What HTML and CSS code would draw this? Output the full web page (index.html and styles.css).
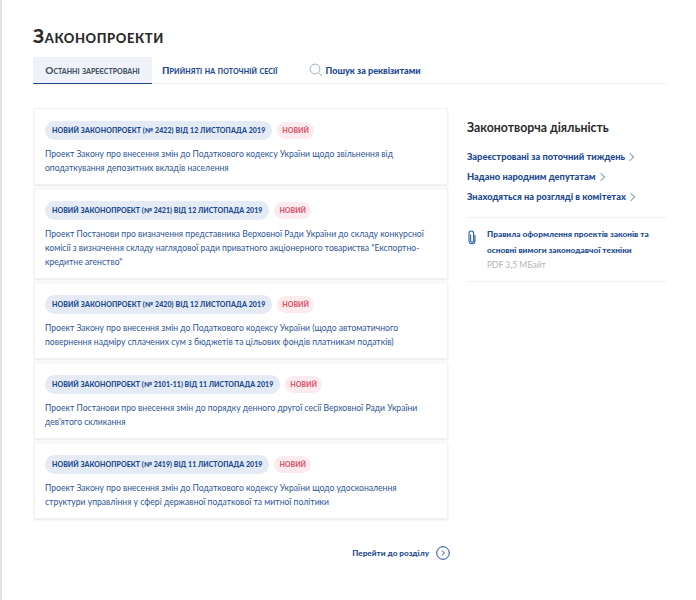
FILE: index.html
```html
<!DOCTYPE html>
<html lang="uk">
<head>
    <meta charset="UTF-8">
    <title>Законопроекти</title>
    <link rel="stylesheet" href="styles.css">
</head>
<body>

<div class="page">
    <h1 class="title">Законопроекти</h1>

    <div class="tabs">
        <a class="tab tab-active">Останні зареєстровані</a>
        <a class="tab tab-link">Прийняті на поточній сесії</a>
        <a class="tab tab-search">
            <svg class="search-icon" viewBox="0 0 14 14" width="14" height="14">
                <circle cx="6" cy="6" r="4.9" fill="none" stroke="#9fb0c4" stroke-width="1"/>
                <path d="M9.6 9.6L13 13" fill="none" stroke="#9fb0c4" stroke-width="1"/>
            </svg>
            Пошук за реквізитами
        </a>
    </div>

    <div class="columns">
        <div class="main">
            <div class="card">
                <div class="card-tags">
                    <span class="pill">Новий законопроект (№ 2422) від 12 листопада 2019</span>
                    <span class="badge">Новий</span>
                </div>
                <p class="card-text">Проект Закону про внесення змін до Податкового кодексу України щодо звільнення від<br>оподаткування депозитних вкладів населення</p>
            </div>
            <div class="card">
                <div class="card-tags">
                    <span class="pill pill-tight">Новий законопроект (№ 2421) від 12 листопада 2019</span>
                    <span class="badge">Новий</span>
                </div>
                <p class="card-text">Проект Постанови про визначення представника Верховної Ради України до складу конкурсної<br>комісії з визначення складу наглядової ради приватного акціонерного товариства "Експортно-<br>кредитне агенство"</p>
            </div>
            <div class="card">
                <div class="card-tags">
                    <span class="pill">Новий законопроект (№ 2420) від 12 листопада 2019</span>
                    <span class="badge">Новий</span>
                </div>
                <p class="card-text">Проект Закону про внесення змін до Податкового кодексу України (щодо автоматичного<br>повернення надміру сплачених сум з бюджетів та цільових фондів платникам податків)</p>
            </div>
            <div class="card">
                <div class="card-tags">
                    <span class="pill pill-tight">Новий законопроект (№ 2101-11) від 11 листопада 2019</span>
                    <span class="badge">Новий</span>
                </div>
                <p class="card-text">Проект Постанови про внесення змін до порядку денного другої сесії Верховної Ради України<br>дев'ятого скликання</p>
            </div>
            <div class="card">
                <div class="card-tags">
                    <span class="pill pill-tight">Новий законопроект (№ 2419) від 11 листопада 2019</span>
                    <span class="badge">Новий</span>
                </div>
                <p class="card-text">Проект Закону про внесення змін до Податкового кодексу України щодо удосконалення<br>структури управління у сфері державної податкової та митної політики</p>
            </div>

            <div class="more">
                <a class="more-link">Перейти до розділу</a>
                <svg viewBox="0 0 14 14" width="14" height="14">
                    <circle cx="7" cy="7" r="6.3" fill="none" stroke="#1d4a8f" stroke-width="1"/>
                    <path d="M6 4.5L8.4 7L6 9.5" fill="none" stroke="#1d4a8f" stroke-width="1"/>
                </svg>
            </div>
        </div>

        <div class="side">
            <h2 class="side-title">Законотворча діяльність</h2>
            <a class="side-link">Зареєстровані за поточний тиждень <span class="chevron"></span></a>
            <a class="side-link">Надано народним депутатам <span class="chevron"></span></a>
            <a class="side-link">Знаходяться на розгляді в комітетах <span class="chevron"></span></a>

            <div class="doc">
                <svg class="clip" viewBox="0 0 10 15" width="10" height="15">
                    <path d="M3.6 4.5V10.6a1.5 1.5 0 0 0 3 0V3.3a2.3 2.3 0 0 0-4.6 0V10.8a3 3 0 0 0 6 0V5" fill="none" stroke="#2b62ad" stroke-width="1.1"/>
                </svg>
                <div>
                    <a class="doc-link">Правила оформлення проектів законів та основні вимоги законодавчої техніки</a>
                    <div class="doc-meta">PDF 3,5 МБайт</div>
                </div>
            </div>
        </div>
    </div>
</div>

</body>
</html>
```

FILE: styles.css
```css
body {
    margin: 0;
    background-color: #fff;
    font-family: 'Lato', 'Noto Sans', sans-serif;
    color: #1d4a8f;
}
.page {
    height: 600px;
    box-sizing: border-box;
    border-left: 2px solid #e2e2e2;
    padding: 25px 30px 0 31px;
    overflow: hidden;
}
.title {
    margin: 0 0 11px;
    font-size: 19px;
    line-height: 21px;
    font-weight: 900;
    font-variant: small-caps;
    letter-spacing: 0.6px;
    color: #2b2b2b;
}
.tabs {
    display: flex;
    align-items: stretch;
    height: 26px;
    border-bottom: 1px solid #ececec;
    margin-bottom: 24px;
}
.tab {
    display: flex;
    align-items: center;
    font-size: 9.1px;
    font-weight: 900;
}
.tab-active {
    width: 119px;
    height: 27px;
    box-sizing: border-box;
    justify-content: center;
    background-color: #eff3f9;
    border-bottom: 1px solid #1d4a8f;
    color: #44546a;
    font-variant: small-caps;
    font-size: 10px;
    font-weight: 900;
}
.tab-link {
    margin-left: 10px;
    font-variant: small-caps;
    font-size: 10px;
    letter-spacing: 0.12px;
}
.tab-search {
    margin-left: 32px;
}
.search-icon {
    margin-right: 2px;
}
.columns {
    display: flex;
    gap: 19px;
}
.main {
    width: 415px;
    flex-shrink: 0;
}
.card {
    padding: 12px 10px 9px;
    margin: 0 0 3px 1px;
    background-color: #fff;
    border: 1px solid #f2f2f2;
    box-shadow: 0 1px 2px rgba(0, 0, 0, 0.1);
}
.card-tags {
    display: flex;
    align-items: center;
    gap: 5px;
    margin-bottom: 7px;
}
.pill {
    padding: 0 7px;
    height: 19px;
    line-height: 19px;
    border-radius: 10px;
    background-color: #e4ebf5;
    font-size: 7px;
    font-weight: 900;
    letter-spacing: 0.1px;
    text-transform: uppercase;
    white-space: nowrap;
}
.pill-tight {
    letter-spacing: 0.04px;
}
.badge {
    padding: 0 5px;
    height: 17px;
    line-height: 17px;
    border-radius: 9px;
    background-color: #fcebee;
    color: #d9596f;
    font-size: 7px;
    font-weight: 900;
    text-transform: uppercase;
}
.card-text {
    margin: 0;
    font-size: 8.6px;
    line-height: 14px;
    color: #2f5596;
    white-space: nowrap;
}
.more {
    display: flex;
    justify-content: flex-end;
    align-items: center;
    gap: 7px;
    margin: 27px -2px 0 0;
}
.more-link {
    font-size: 8.2px;
    font-weight: 900;
}
.side {
    flex: 1;
    padding-top: 12px;
}
.side-title {
    margin: 0 0 11px;
    font-size: 12.3px;
    line-height: 16px;
    font-weight: 700;
    color: #2b2b2b;
}
.side-link {
    display: block;
    height: 20px;
    line-height: 20px;
    font-size: 9.3px;
    font-weight: 900;
}
.chevron {
    display: inline-block;
    width: 5px;
    height: 5px;
    border-top: 1px solid #8aa0bd;
    border-right: 1px solid #8aa0bd;
    transform: rotate(45deg);
}
.doc {
    display: flex;
    gap: 10px;
    margin-top: 10px;
    padding: 8px 0 9px;
    border-top: 1px solid #f0f0f0;
    border-bottom: 1px solid #f0f0f0;
}
.clip {
    margin-top: 4px;
    flex-shrink: 0;
}
.doc-link {
    display: block;
    font-size: 8.3px;
    line-height: 16px;
    font-weight: 900;
}
.doc-meta {
    font-size: 8.5px;
    line-height: 14px;
    color: #b5b5b5;
}
```
